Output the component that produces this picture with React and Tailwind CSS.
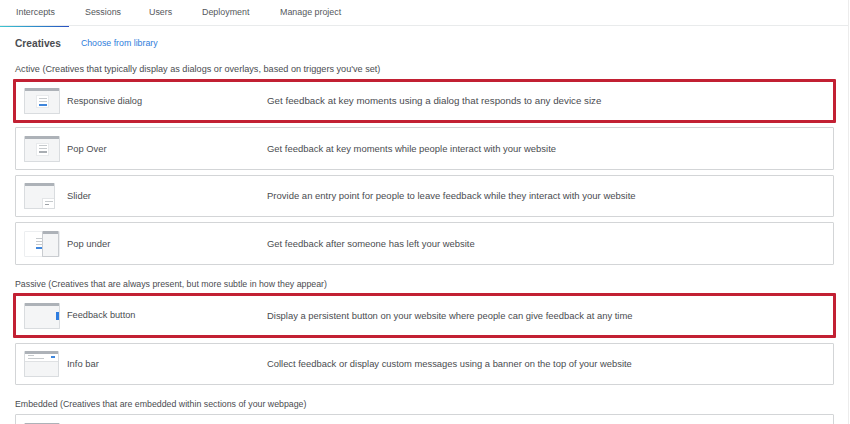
const tabs = [
  { name: 'Intercepts', w: 'w-[69px] pl-[16px]' },
  { name: 'Sessions', w: 'w-[69px] pl-[16px]' },
  { name: 'Users', w: 'w-[53px] pl-[11px]' },
  { name: 'Deployment', w: 'w-[78px] pl-[11px]' },
  { name: 'Manage project', w: 'w-[90px] pl-[11px]' },
]

function Frame({ w = 'w-[36px]', children }) {
  return (
    <div className={`relative ${w} h-[26px] shrink-0 bg-[#f4f5f6] border border-t-0 border-[#d9dcdf] rounded-[1px] overflow-hidden`}>
      <div className="h-[3px] bg-[#adb2b8]" />
      {children}
    </div>
  )
}

function DialogIcon({ blue }) {
  return (
    <Frame>
      <div className="absolute left-[11px] top-[7px] w-[13px] h-[13px] bg-white border border-[#e8eaec] flex flex-col items-center justify-center gap-[2px]">
        <div className="w-[8px] h-px bg-[#c6cacd]" />
        <div className="w-[8px] h-px bg-[#c6cacd]" />
        <div className={`w-[8px] h-[2px] ${blue ? 'bg-[#3f86dc]' : 'bg-[#a9aeb3]'}`} />
      </div>
    </Frame>
  )
}

function SliderIcon() {
  return (
    <div className="w-[36px] shrink-0">
      <Frame w="w-[31px]">
        <div className="absolute right-0 bottom-0 w-[12px] h-[10px] bg-white border-t border-l border-[#e3e5e7] flex flex-col gap-[2px] px-[2px] pt-[2px]">
          <div className="w-[8px] h-px bg-[#c6cacd]" />
          <div className="w-[4px] h-px bg-[#9da2a7]" />
        </div>
      </Frame>
    </div>
  )
}

function PopUnderIcon() {
  return (
    <div className="relative w-[36px] h-[26px] shrink-0 border border-[#eceef0] rounded-[1px] bg-white">
      <div className="absolute left-[11px] top-[6px] flex flex-col gap-[2px]">
        <div className="w-[6px] h-px bg-[#c6cacd]" />
        <div className="w-[6px] h-px bg-[#c6cacd]" />
        <div className="w-[6px] h-px bg-[#c6cacd]" />
        <div className="w-[6px] h-[2px] bg-[#3f86dc]" />
      </div>
      <div className="absolute right-0 -top-px w-[17px] h-[26px] bg-[#f4f5f6] border border-t-0 border-[#c9ccd0] rounded-[1px] overflow-hidden">
        <div className="h-[3px] bg-[#adb2b8]" />
      </div>
    </div>
  )
}

function FeedbackIcon() {
  return (
    <Frame>
      <div className="absolute right-0 top-[9px] w-[3px] h-[8px] bg-[#2f7de0]" />
    </Frame>
  )
}

function InfoIcon() {
  return (
    <Frame w="w-[35px]">
      <div className="relative h-[8px] bg-white border-b border-[#dfe1e3]">
        <div className="absolute left-[3px] top-[1px] w-[6px] h-px bg-[#c6cacd]" />
        <div className="absolute left-[3px] top-[4px] w-[16px] h-px bg-[#c6cacd]" />
        <div className="absolute right-[3px] top-[2px] w-[4px] h-[2px] bg-[#3f86dc]" />
      </div>
    </Frame>
  )
}

function Row({ icon, name, text, marked, className = '', textClass = 'text-[9.45px]', nameClass = 'text-[9.4px]' }) {
  return (
    <div className={`flex items-center bg-white rounded-[1px] ${marked ? 'mx-[-2px] px-[8px] border-[3px] border-[#c22033]' : 'px-[8px] border border-[#d3d5d7]'} ${className}`}>
      <div className="w-[43px] shrink-0">{icon}</div>
      <div className={`w-[200px] shrink-0 pt-[1px] ${nameClass}`}>{name}</div>
      <div className={`pt-[1px] ${textClass}`}>{text}</div>
    </div>
  )
}

export default function App() {
  return (
    <div className="w-[850px] h-[424px] overflow-hidden bg-white text-[#4a4c50] font-['Liberation_Sans',Arial,sans-serif]">
      <div className="w-[849px] h-[424px] border-r border-[#ececec]">
        <div className="flex h-[26px] border-b border-[#e9ebec] text-[8.9px] text-[#55585c]">
          {tabs.map((t, i) => (
            <div key={t.name} className={`relative flex items-center h-[26px] ${t.w}`}>
              {t.name}
              {i === 0 && (
                <div className="absolute left-0 right-0 bottom-[-1px] h-px bg-gradient-to-r from-[#3fc7d0] to-[#2b4fc0]" />
              )}
            </div>
          ))}
        </div>

        <div className="flex flex-col w-[819px] ml-[15px]">
          <div className="flex items-center gap-[20px] h-[36px]">
            <span className="text-[10.2px] font-bold">Creatives</span>
            <span className="text-[#2f7ddb] text-[8.8px]">Choose from library</span>
          </div>
          <div className="h-[17px] flex items-center pb-[2px] text-[9.15px]">Active (Creatives that typically display as dialogs or overlays, based on triggers you've set)</div>

          <Row marked className="h-[44px]" textClass="text-[9.75px]" nameClass="text-[9.2px]" icon={<DialogIcon blue />} name="Responsive dialog" text="Get feedback at key moments using a dialog that responds to any device size" />
          <Row className="h-[43px] mt-[4px]" icon={<DialogIcon />} name="Pop Over" text="Get feedback at key moments while people interact with your website" />
          <Row className="h-[42px] mt-[5px]" textClass="text-[9.5px]" icon={<SliderIcon />} name="Slider" text="Provide an entry point for people to leave feedback while they interact with your website" />
          <Row className="h-[43px] mt-[5px]" icon={<PopUnderIcon />} name="Pop under" text="Get feedback after someone has left your website" />

          <div className="h-[28px] flex items-end pb-[2px] text-[8.8px]">Passive (Creatives that are always present, but more subtle in how they appear)</div>
          <Row marked className="h-[45px]" nameClass="text-[9.2px]" textClass="text-[9.42px]" icon={<FeedbackIcon />} name="Feedback button" text="Display a persistent button on your website where people can give feedback at any time" />
          <Row className="h-[42px] mt-[5px]" textClass="text-[9.38px]" icon={<InfoIcon />} name="Info bar" text="Collect feedback or display custom messages using a banner on the top of your website" />

          <div className="h-[29px] flex items-end pb-[3px] text-[8.8px]">Embedded (Creatives that are embedded within sections of your webpage)</div>
          <Row className="h-[43px]" icon={<DialogIcon />} name="" text="" />
        </div>
      </div>
    </div>
  )
}
